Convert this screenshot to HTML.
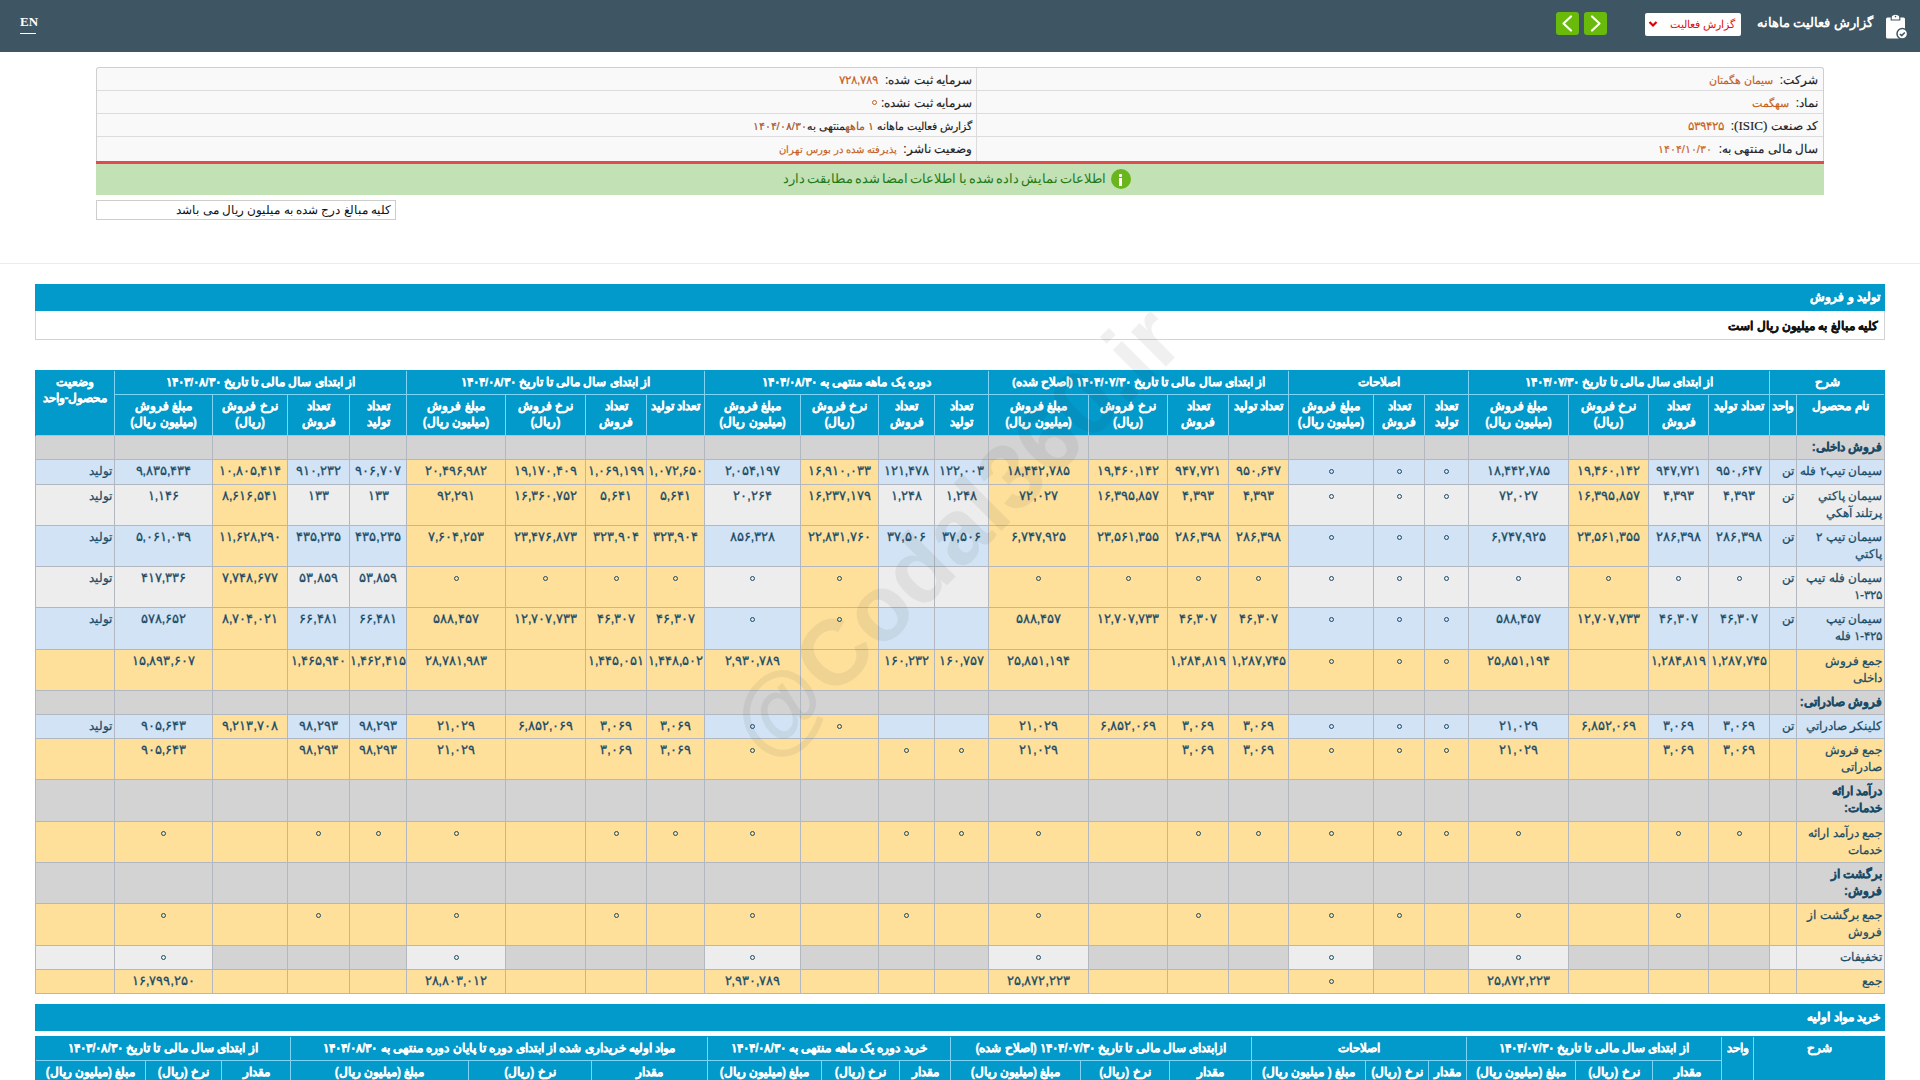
<!DOCTYPE html>
<html lang="fa"><head><meta charset="utf-8"><title>Codal</title><style>
*{margin:0;padding:0;box-sizing:border-box}
html,body{width:1920px;height:1080px;overflow:hidden;background:#fff;font-family:"Liberation Sans",sans-serif}
.a{position:absolute}
.c{position:absolute;border:1px solid;overflow:hidden;text-align:center;white-space:nowrap;direction:rtl}
.hc{padding-top:3px}
.hc0{padding-top:3px}
.bc{padding-top:2.5px}
.br{padding-top:2.5px;text-align:right;padding-right:2px}
.h{display:block;color:#fff;font-weight:bold;font-size:12px;line-height:16px;-webkit-text-stroke:0.3px #fff}
.h0{display:block;color:#fff;font-weight:bold;font-size:11.6px;line-height:16px;-webkit-text-stroke:0.3px #fff}
.b{display:block;color:#1a4b66;font-size:12px;line-height:17px;-webkit-text-stroke:0.25px #1a4b66}
.n{display:block;color:#1a4b66;font-size:12.5px;line-height:17px;-webkit-text-stroke:0.3px #1a4b66}
.z{display:inline-block;width:5px;height:5px;border:1.7px solid #1a4b66;border-radius:50%;vertical-align:middle;margin-top:1px}
.gl{display:block;color:#1a4b66;font-size:12px;font-weight:bold;line-height:17px;-webkit-text-stroke:0.3px #1a4b66}
</style></head>
<body>

<div class="a" style="left:0;top:0;width:1920px;height:52px;background:#3e5663"></div>
<div class="a" style="left:20px;top:15px;color:#fff;font-family:'Liberation Serif',serif;font-size:13px;font-weight:bold;line-height:14px">EN</div>
<div class="a" style="left:20px;top:33px;width:16px;height:1px;background:#fff"></div>
<div class="a" style="right:47px;top:12px;color:#fff;font-size:13.3px;font-weight:bold;line-height:22px;direction:rtl">گزارش فعالیت ماهانه</div>
<div class="a" style="left:1645px;top:13px;width:96px;height:23px;background:#fff;border-radius:2px"></div>
<div class="a" style="right:185px;top:13px;color:#e01010;font-size:10.8px;line-height:22px;direction:rtl">گزارش فعالیت</div>
<svg class="a" style="left:1648px;top:20px" width="10" height="8" viewBox="0 0 10 8"><path d="M1.5 2 L5 5.5 L8.5 2" stroke="#d00" stroke-width="2.2" fill="none"/></svg>
<div class="a" style="left:1556px;top:12px;width:23px;height:23px;background:#6aba0c;border-radius:3px"></div>
<div class="a" style="left:1584px;top:12px;width:23px;height:23px;background:#6aba0c;border-radius:3px"></div>
<svg class="a" style="left:1556px;top:12px" width="23" height="23" viewBox="0 0 23 23"><path d="M15 4.5 L7.5 11.5 L15 18.5" stroke="#fff" stroke-width="2.2" stroke-linecap="round" stroke-linejoin="round" fill="none"/></svg>
<svg class="a" style="left:1584px;top:12px" width="23" height="23" viewBox="0 0 23 23"><path d="M8 4.5 L15.5 11.5 L8 18.5" stroke="#fff" stroke-width="2.2" stroke-linecap="round" stroke-linejoin="round" fill="none"/></svg>
<svg class="a" style="left:1885px;top:13px" width="24" height="27" viewBox="0 0 24 27">
 <rect x="1" y="4.6" width="19" height="20.8" rx="1.5" fill="#fff"/>
 <path d="M6.2 7 L6.2 4.5 Q6.2 2.5 8.2 1.8 Q10.5 0.6 12.8 1.8 Q14.8 2.5 14.8 4.5 L14.8 7 Z" fill="#fff" stroke="#3e5663" stroke-width="1.1"/>
 <circle cx="10.5" cy="3.6" r="0.8" fill="#3e5663"/>
 <circle cx="17.3" cy="20.8" r="5.3" fill="#fff" stroke="#3e5663" stroke-width="1.5"/>
 <path d="M14.9 21 L16.7 22.6 L19.8 19.4" stroke="#3e5663" stroke-width="1.5" fill="none"/>
</svg>


<div class="a" style="left:96px;top:67px;width:1728px;height:95px;background:#f9f9f9;border:1px solid #cfcfcf;border-bottom:none;border-radius:3px 3px 0 0"></div>
<div class="a" style="left:97px;top:90px;width:1726px;height:1px;background:#dcdcdc"></div>
<div class="a" style="left:97px;top:113px;width:1726px;height:1px;background:#dcdcdc"></div>
<div class="a" style="left:97px;top:136px;width:1726px;height:1px;background:#dcdcdc"></div>
<div class="a" style="left:976px;top:68px;width:1px;height:93px;background:#dcdcdc"></div>
<div class="a" style="left:96px;top:161px;width:1728px;height:3px;background:#e24b4b"></div>
<div class="a" style="left:96px;top:164px;width:1728px;height:31px;background:#c2e1b4"></div>
<div class="a" style="right:102px;top:69px;font-size:12px;line-height:22px;direction:rtl;white-space:nowrap;color:#222;-webkit-text-stroke:0.15px #222">شرکت:&nbsp; <span style="color:#c65f1e;font-size:10.8px;-webkit-text-stroke:0.15px #c65f1e">سیمان هگمتان</span></div><div class="a" style="right:102px;top:92px;font-size:12px;line-height:22px;direction:rtl;white-space:nowrap;color:#222;-webkit-text-stroke:0.15px #222">نماد:&nbsp; <span style="color:#c65f1e;font-size:10.8px;-webkit-text-stroke:0.15px #c65f1e">سهگمت</span></div><div class="a" style="right:102px;top:115px;font-size:12px;line-height:22px;direction:rtl;white-space:nowrap;color:#222;-webkit-text-stroke:0.15px #222">کد صنعت <span style="font-family:'Liberation Serif',serif;font-size:13px">(ISIC)</span>:&nbsp; <span style="color:#c65f1e;font-size:12px;-webkit-text-stroke:0.15px #c65f1e">۵۳۹۴۲۵</span></div><div class="a" style="right:102px;top:138px;font-size:12px;line-height:22px;direction:rtl;white-space:nowrap;color:#222;-webkit-text-stroke:0.15px #222">سال مالی منتهی به:&nbsp; <span style="color:#c65f1e;font-size:11.3px;-webkit-text-stroke:0.15px #c65f1e">۱۴۰۴/۱۰/۳۰</span></div><div class="a" style="right:948px;top:69px;font-size:12px;line-height:22px;direction:rtl;white-space:nowrap;color:#222;-webkit-text-stroke:0.15px #222">سرمایه ثبت شده:&nbsp; <span style="color:#c65f1e;font-size:12px;-webkit-text-stroke:0.15px #c65f1e">۷۲۸,۷۸۹</span></div><div class="a" style="right:948px;top:92px;font-size:12px;line-height:22px;direction:rtl;white-space:nowrap;color:#222;-webkit-text-stroke:0.15px #222">سرمایه ثبت نشده:</div><div class="a" style="left:872px;top:100px;width:5px;height:5px;border:1.4px solid #c65f1e;border-radius:50%"></div><div class="a" style="right:948px;top:115px;font-size:11px;line-height:22px;direction:rtl;white-space:nowrap;color:#222;-webkit-text-stroke:0.15px #222">گزارش فعالیت ماهانه <span style="color:#c65f1e">۱ ماهه</span>منتهی به<span style="color:#c65f1e">۱۴۰۴/۰۸/۳۰</span></div><div class="a" style="right:948px;top:138px;font-size:12px;line-height:22px;direction:rtl;white-space:nowrap;color:#222;-webkit-text-stroke:0.15px #222">وضعیت ناشر:&nbsp; <span style="color:#c65f1e;font-size:10.2px;-webkit-text-stroke:0.15px #c65f1e">پذیرفته شده در بورس تهران</span></div>
<div class="a" style="left:1111px;top:169px;width:20px;height:20px;border-radius:50%;background:#69b51c"></div>
<div class="a" style="left:1119px;top:174px;width:3px;height:3px;background:#fff;border-radius:1px"></div>
<div class="a" style="left:1119px;top:178px;width:3px;height:8px;background:#fff"></div>
<div class="a" style="right:814px;top:168px;font-size:13px;word-spacing:-1.5px;line-height:22px;direction:rtl;white-space:nowrap;color:#1f7a17">اطلاعات نمایش داده شده با اطلاعات امضا شده مطابقت دارد</div>
<div class="a" style="left:96px;top:200px;width:300px;height:20px;border:1px solid #cdcdcd;background:#fff"></div>
<div class="a" style="right:1529px;top:200px;font-size:12px;line-height:20px;direction:rtl;white-space:nowrap;color:#111">کلیه مبالغ درج شده به میلیون ریال می باشد</div>
<div class="a" style="left:0;top:263px;width:1920px;height:1px;background:#ececec"></div>
<div class="a" style="left:35px;top:284px;width:1850px;height:27px;background:#0299cb"></div>
<div class="a" style="right:40px;top:286px;font-size:12px;font-weight:bold;line-height:22px;direction:rtl;color:#fff;-webkit-text-stroke:0.4px #fff">تولید و فروش</div>
<div class="a" style="left:35px;top:311px;width:1850px;height:29px;border:1px solid #d3d3d3;border-top:none;background:#fff"></div>
<div class="a" style="right:42px;top:315px;font-size:12px;font-weight:bold;line-height:22px;direction:rtl;color:#111;-webkit-text-stroke:0.4px #111">کلیه مبالغ به میلیون ریال است</div>
<div class="a" style="left:35px;top:1004px;width:1850px;height:27px;background:#0299cb"></div>
<div class="a" style="right:40px;top:1006px;font-size:12px;font-weight:bold;line-height:22px;direction:rtl;color:#fff;-webkit-text-stroke:0.4px #fff">خرید مواد اولیه</div>

<div class="c br" style="left:1796px;top:435px;width:89px;height:25px;background:#d3d3d3;border-color:#b3b8c0;"><span class="gl">فروش داخلی:</span></div>
<div class="c br" style="left:1769px;top:435px;width:28px;height:25px;background:#d3d3d3;border-color:#b3b8c0;"></div>
<div class="c bc" style="left:1708px;top:435px;width:62px;height:25px;background:#d3d3d3;border-color:#b3b8c0;"></div>
<div class="c bc" style="left:1648px;top:435px;width:61px;height:25px;background:#d3d3d3;border-color:#b3b8c0;"></div>
<div class="c bc" style="left:1568px;top:435px;width:81px;height:25px;background:#d3d3d3;border-color:#b3b8c0;"></div>
<div class="c bc" style="left:1468px;top:435px;width:101px;height:25px;background:#d3d3d3;border-color:#b3b8c0;"></div>
<div class="c bc" style="left:1424px;top:435px;width:45px;height:25px;background:#d3d3d3;border-color:#b3b8c0;"></div>
<div class="c bc" style="left:1373px;top:435px;width:52px;height:25px;background:#d3d3d3;border-color:#b3b8c0;"></div>
<div class="c bc" style="left:1288px;top:435px;width:86px;height:25px;background:#d3d3d3;border-color:#b3b8c0;"></div>
<div class="c bc" style="left:1228px;top:435px;width:61px;height:25px;background:#d3d3d3;border-color:#b3b8c0;"></div>
<div class="c bc" style="left:1167px;top:435px;width:62px;height:25px;background:#d3d3d3;border-color:#b3b8c0;"></div>
<div class="c bc" style="left:1088px;top:435px;width:80px;height:25px;background:#d3d3d3;border-color:#b3b8c0;"></div>
<div class="c bc" style="left:988px;top:435px;width:101px;height:25px;background:#d3d3d3;border-color:#b3b8c0;"></div>
<div class="c bc" style="left:934px;top:435px;width:55px;height:25px;background:#d3d3d3;border-color:#b3b8c0;"></div>
<div class="c bc" style="left:878px;top:435px;width:57px;height:25px;background:#d3d3d3;border-color:#b3b8c0;"></div>
<div class="c bc" style="left:800px;top:435px;width:79px;height:25px;background:#d3d3d3;border-color:#b3b8c0;"></div>
<div class="c bc" style="left:704px;top:435px;width:97px;height:25px;background:#d3d3d3;border-color:#b3b8c0;"></div>
<div class="c bc" style="left:646px;top:435px;width:59px;height:25px;background:#d3d3d3;border-color:#b3b8c0;"></div>
<div class="c bc" style="left:585px;top:435px;width:62px;height:25px;background:#d3d3d3;border-color:#b3b8c0;"></div>
<div class="c bc" style="left:505px;top:435px;width:81px;height:25px;background:#d3d3d3;border-color:#b3b8c0;"></div>
<div class="c bc" style="left:406px;top:435px;width:100px;height:25px;background:#d3d3d3;border-color:#b3b8c0;"></div>
<div class="c bc" style="left:349px;top:435px;width:58px;height:25px;background:#d3d3d3;border-color:#b3b8c0;"></div>
<div class="c bc" style="left:287px;top:435px;width:63px;height:25px;background:#d3d3d3;border-color:#b3b8c0;"></div>
<div class="c bc" style="left:212px;top:435px;width:76px;height:25px;background:#d3d3d3;border-color:#b3b8c0;"></div>
<div class="c bc" style="left:114px;top:435px;width:99px;height:25px;background:#d3d3d3;border-color:#b3b8c0;"></div>
<div class="c br" style="left:35px;top:435px;width:80px;height:25px;background:#d3d3d3;border-color:#b3b8c0;"></div>
<div class="c br" style="left:1796px;top:459px;width:89px;height:26px;background:#d1e3f4;border-color:#b3b8c0;"><span class="b">سیمان تیپ۲ فله</span></div>
<div class="c br" style="left:1769px;top:459px;width:28px;height:26px;background:#d1e3f4;border-color:#b3b8c0;"><span class="b">تن</span></div>
<div class="c bc" style="left:1708px;top:459px;width:62px;height:26px;background:#d1e3f4;border-color:#b3b8c0;"><span class="n">۹۵۰,۶۴۷</span></div>
<div class="c bc" style="left:1648px;top:459px;width:61px;height:26px;background:#d1e3f4;border-color:#b3b8c0;"><span class="n">۹۴۷,۷۲۱</span></div>
<div class="c bc" style="left:1568px;top:459px;width:81px;height:26px;background:#fee09b;border-color:#b3b8c0;"><span class="n">۱۹,۴۶۰,۱۴۲</span></div>
<div class="c bc" style="left:1468px;top:459px;width:101px;height:26px;background:#d1e3f4;border-color:#b3b8c0;"><span class="n">۱۸,۴۴۲,۷۸۵</span></div>
<div class="c bc" style="left:1424px;top:459px;width:45px;height:26px;background:#d1e3f4;border-color:#b3b8c0;"><span class="n"><i class="z"></i></span></div>
<div class="c bc" style="left:1373px;top:459px;width:52px;height:26px;background:#d1e3f4;border-color:#b3b8c0;"><span class="n"><i class="z"></i></span></div>
<div class="c bc" style="left:1288px;top:459px;width:86px;height:26px;background:#d1e3f4;border-color:#b3b8c0;"><span class="n"><i class="z"></i></span></div>
<div class="c bc" style="left:1228px;top:459px;width:61px;height:26px;background:#fee09b;border-color:#b3b8c0;"><span class="n">۹۵۰,۶۴۷</span></div>
<div class="c bc" style="left:1167px;top:459px;width:62px;height:26px;background:#fee09b;border-color:#b3b8c0;"><span class="n">۹۴۷,۷۲۱</span></div>
<div class="c bc" style="left:1088px;top:459px;width:80px;height:26px;background:#fee09b;border-color:#b3b8c0;"><span class="n">۱۹,۴۶۰,۱۴۲</span></div>
<div class="c bc" style="left:988px;top:459px;width:101px;height:26px;background:#fee09b;border-color:#b3b8c0;"><span class="n">۱۸,۴۴۲,۷۸۵</span></div>
<div class="c bc" style="left:934px;top:459px;width:55px;height:26px;background:#d1e3f4;border-color:#b3b8c0;"><span class="n">۱۲۲,۰۰۳</span></div>
<div class="c bc" style="left:878px;top:459px;width:57px;height:26px;background:#d1e3f4;border-color:#b3b8c0;"><span class="n">۱۲۱,۴۷۸</span></div>
<div class="c bc" style="left:800px;top:459px;width:79px;height:26px;background:#fee09b;border-color:#b3b8c0;"><span class="n">۱۶,۹۱۰,۰۳۳</span></div>
<div class="c bc" style="left:704px;top:459px;width:97px;height:26px;background:#d1e3f4;border-color:#b3b8c0;"><span class="n">۲,۰۵۴,۱۹۷</span></div>
<div class="c bc" style="left:646px;top:459px;width:59px;height:26px;background:#fee09b;border-color:#b3b8c0;"><span class="n">۱,۰۷۲,۶۵۰</span></div>
<div class="c bc" style="left:585px;top:459px;width:62px;height:26px;background:#fee09b;border-color:#b3b8c0;"><span class="n">۱,۰۶۹,۱۹۹</span></div>
<div class="c bc" style="left:505px;top:459px;width:81px;height:26px;background:#fee09b;border-color:#b3b8c0;"><span class="n">۱۹,۱۷۰,۴۰۹</span></div>
<div class="c bc" style="left:406px;top:459px;width:100px;height:26px;background:#fee09b;border-color:#b3b8c0;"><span class="n">۲۰,۴۹۶,۹۸۲</span></div>
<div class="c bc" style="left:349px;top:459px;width:58px;height:26px;background:#d1e3f4;border-color:#b3b8c0;"><span class="n">۹۰۶,۷۰۷</span></div>
<div class="c bc" style="left:287px;top:459px;width:63px;height:26px;background:#d1e3f4;border-color:#b3b8c0;"><span class="n">۹۱۰,۲۳۲</span></div>
<div class="c bc" style="left:212px;top:459px;width:76px;height:26px;background:#fee09b;border-color:#b3b8c0;"><span class="n">۱۰,۸۰۵,۴۱۴</span></div>
<div class="c bc" style="left:114px;top:459px;width:99px;height:26px;background:#d1e3f4;border-color:#b3b8c0;"><span class="n">۹,۸۳۵,۴۳۴</span></div>
<div class="c br" style="left:35px;top:459px;width:80px;height:26px;background:#d1e3f4;border-color:#b3b8c0;"><span class="b">تولید</span></div>
<div class="c br" style="left:1796px;top:484px;width:89px;height:42px;background:#ededed;border-color:#b3b8c0;"><span class="b">سیمان پاکتي<br>پرتلند آهکي</span></div>
<div class="c br" style="left:1769px;top:484px;width:28px;height:42px;background:#ededed;border-color:#b3b8c0;"><span class="b">تن</span></div>
<div class="c bc" style="left:1708px;top:484px;width:62px;height:42px;background:#ededed;border-color:#b3b8c0;"><span class="n">۴,۳۹۳</span></div>
<div class="c bc" style="left:1648px;top:484px;width:61px;height:42px;background:#ededed;border-color:#b3b8c0;"><span class="n">۴,۳۹۳</span></div>
<div class="c bc" style="left:1568px;top:484px;width:81px;height:42px;background:#fee09b;border-color:#b3b8c0;"><span class="n">۱۶,۳۹۵,۸۵۷</span></div>
<div class="c bc" style="left:1468px;top:484px;width:101px;height:42px;background:#ededed;border-color:#b3b8c0;"><span class="n">۷۲,۰۲۷</span></div>
<div class="c bc" style="left:1424px;top:484px;width:45px;height:42px;background:#ededed;border-color:#b3b8c0;"><span class="n"><i class="z"></i></span></div>
<div class="c bc" style="left:1373px;top:484px;width:52px;height:42px;background:#ededed;border-color:#b3b8c0;"><span class="n"><i class="z"></i></span></div>
<div class="c bc" style="left:1288px;top:484px;width:86px;height:42px;background:#ededed;border-color:#b3b8c0;"><span class="n"><i class="z"></i></span></div>
<div class="c bc" style="left:1228px;top:484px;width:61px;height:42px;background:#fee09b;border-color:#b3b8c0;"><span class="n">۴,۳۹۳</span></div>
<div class="c bc" style="left:1167px;top:484px;width:62px;height:42px;background:#fee09b;border-color:#b3b8c0;"><span class="n">۴,۳۹۳</span></div>
<div class="c bc" style="left:1088px;top:484px;width:80px;height:42px;background:#fee09b;border-color:#b3b8c0;"><span class="n">۱۶,۳۹۵,۸۵۷</span></div>
<div class="c bc" style="left:988px;top:484px;width:101px;height:42px;background:#fee09b;border-color:#b3b8c0;"><span class="n">۷۲,۰۲۷</span></div>
<div class="c bc" style="left:934px;top:484px;width:55px;height:42px;background:#ededed;border-color:#b3b8c0;"><span class="n">۱,۲۴۸</span></div>
<div class="c bc" style="left:878px;top:484px;width:57px;height:42px;background:#ededed;border-color:#b3b8c0;"><span class="n">۱,۲۴۸</span></div>
<div class="c bc" style="left:800px;top:484px;width:79px;height:42px;background:#fee09b;border-color:#b3b8c0;"><span class="n">۱۶,۲۳۷,۱۷۹</span></div>
<div class="c bc" style="left:704px;top:484px;width:97px;height:42px;background:#ededed;border-color:#b3b8c0;"><span class="n">۲۰,۲۶۴</span></div>
<div class="c bc" style="left:646px;top:484px;width:59px;height:42px;background:#fee09b;border-color:#b3b8c0;"><span class="n">۵,۶۴۱</span></div>
<div class="c bc" style="left:585px;top:484px;width:62px;height:42px;background:#fee09b;border-color:#b3b8c0;"><span class="n">۵,۶۴۱</span></div>
<div class="c bc" style="left:505px;top:484px;width:81px;height:42px;background:#fee09b;border-color:#b3b8c0;"><span class="n">۱۶,۳۶۰,۷۵۲</span></div>
<div class="c bc" style="left:406px;top:484px;width:100px;height:42px;background:#fee09b;border-color:#b3b8c0;"><span class="n">۹۲,۲۹۱</span></div>
<div class="c bc" style="left:349px;top:484px;width:58px;height:42px;background:#ededed;border-color:#b3b8c0;"><span class="n">۱۳۳</span></div>
<div class="c bc" style="left:287px;top:484px;width:63px;height:42px;background:#ededed;border-color:#b3b8c0;"><span class="n">۱۳۳</span></div>
<div class="c bc" style="left:212px;top:484px;width:76px;height:42px;background:#fee09b;border-color:#b3b8c0;"><span class="n">۸,۶۱۶,۵۴۱</span></div>
<div class="c bc" style="left:114px;top:484px;width:99px;height:42px;background:#ededed;border-color:#b3b8c0;"><span class="n">۱,۱۴۶</span></div>
<div class="c br" style="left:35px;top:484px;width:80px;height:42px;background:#ededed;border-color:#b3b8c0;"><span class="b">تولید</span></div>
<div class="c br" style="left:1796px;top:525px;width:89px;height:42px;background:#d1e3f4;border-color:#b3b8c0;"><span class="b">سیمان تیپ ۲<br>پاکتي</span></div>
<div class="c br" style="left:1769px;top:525px;width:28px;height:42px;background:#d1e3f4;border-color:#b3b8c0;"><span class="b">تن</span></div>
<div class="c bc" style="left:1708px;top:525px;width:62px;height:42px;background:#d1e3f4;border-color:#b3b8c0;"><span class="n">۲۸۶,۳۹۸</span></div>
<div class="c bc" style="left:1648px;top:525px;width:61px;height:42px;background:#d1e3f4;border-color:#b3b8c0;"><span class="n">۲۸۶,۳۹۸</span></div>
<div class="c bc" style="left:1568px;top:525px;width:81px;height:42px;background:#fee09b;border-color:#b3b8c0;"><span class="n">۲۳,۵۶۱,۳۵۵</span></div>
<div class="c bc" style="left:1468px;top:525px;width:101px;height:42px;background:#d1e3f4;border-color:#b3b8c0;"><span class="n">۶,۷۴۷,۹۲۵</span></div>
<div class="c bc" style="left:1424px;top:525px;width:45px;height:42px;background:#d1e3f4;border-color:#b3b8c0;"><span class="n"><i class="z"></i></span></div>
<div class="c bc" style="left:1373px;top:525px;width:52px;height:42px;background:#d1e3f4;border-color:#b3b8c0;"><span class="n"><i class="z"></i></span></div>
<div class="c bc" style="left:1288px;top:525px;width:86px;height:42px;background:#d1e3f4;border-color:#b3b8c0;"><span class="n"><i class="z"></i></span></div>
<div class="c bc" style="left:1228px;top:525px;width:61px;height:42px;background:#fee09b;border-color:#b3b8c0;"><span class="n">۲۸۶,۳۹۸</span></div>
<div class="c bc" style="left:1167px;top:525px;width:62px;height:42px;background:#fee09b;border-color:#b3b8c0;"><span class="n">۲۸۶,۳۹۸</span></div>
<div class="c bc" style="left:1088px;top:525px;width:80px;height:42px;background:#fee09b;border-color:#b3b8c0;"><span class="n">۲۳,۵۶۱,۳۵۵</span></div>
<div class="c bc" style="left:988px;top:525px;width:101px;height:42px;background:#fee09b;border-color:#b3b8c0;"><span class="n">۶,۷۴۷,۹۲۵</span></div>
<div class="c bc" style="left:934px;top:525px;width:55px;height:42px;background:#d1e3f4;border-color:#b3b8c0;"><span class="n">۳۷,۵۰۶</span></div>
<div class="c bc" style="left:878px;top:525px;width:57px;height:42px;background:#d1e3f4;border-color:#b3b8c0;"><span class="n">۳۷,۵۰۶</span></div>
<div class="c bc" style="left:800px;top:525px;width:79px;height:42px;background:#fee09b;border-color:#b3b8c0;"><span class="n">۲۲,۸۳۱,۷۶۰</span></div>
<div class="c bc" style="left:704px;top:525px;width:97px;height:42px;background:#d1e3f4;border-color:#b3b8c0;"><span class="n">۸۵۶,۳۲۸</span></div>
<div class="c bc" style="left:646px;top:525px;width:59px;height:42px;background:#fee09b;border-color:#b3b8c0;"><span class="n">۳۲۳,۹۰۴</span></div>
<div class="c bc" style="left:585px;top:525px;width:62px;height:42px;background:#fee09b;border-color:#b3b8c0;"><span class="n">۳۲۳,۹۰۴</span></div>
<div class="c bc" style="left:505px;top:525px;width:81px;height:42px;background:#fee09b;border-color:#b3b8c0;"><span class="n">۲۳,۴۷۶,۸۷۳</span></div>
<div class="c bc" style="left:406px;top:525px;width:100px;height:42px;background:#fee09b;border-color:#b3b8c0;"><span class="n">۷,۶۰۴,۲۵۳</span></div>
<div class="c bc" style="left:349px;top:525px;width:58px;height:42px;background:#d1e3f4;border-color:#b3b8c0;"><span class="n">۴۳۵,۲۳۵</span></div>
<div class="c bc" style="left:287px;top:525px;width:63px;height:42px;background:#d1e3f4;border-color:#b3b8c0;"><span class="n">۴۳۵,۲۳۵</span></div>
<div class="c bc" style="left:212px;top:525px;width:76px;height:42px;background:#fee09b;border-color:#b3b8c0;"><span class="n">۱۱,۶۲۸,۲۹۰</span></div>
<div class="c bc" style="left:114px;top:525px;width:99px;height:42px;background:#d1e3f4;border-color:#b3b8c0;"><span class="n">۵,۰۶۱,۰۳۹</span></div>
<div class="c br" style="left:35px;top:525px;width:80px;height:42px;background:#d1e3f4;border-color:#b3b8c0;"><span class="b">تولید</span></div>
<div class="c br" style="left:1796px;top:566px;width:89px;height:42px;background:#ededed;border-color:#b3b8c0;"><span class="b">سیمان فله تیپ<br>۱-۳۲۵</span></div>
<div class="c br" style="left:1769px;top:566px;width:28px;height:42px;background:#ededed;border-color:#b3b8c0;"><span class="b">تن</span></div>
<div class="c bc" style="left:1708px;top:566px;width:62px;height:42px;background:#ededed;border-color:#b3b8c0;"><span class="n"><i class="z"></i></span></div>
<div class="c bc" style="left:1648px;top:566px;width:61px;height:42px;background:#ededed;border-color:#b3b8c0;"><span class="n"><i class="z"></i></span></div>
<div class="c bc" style="left:1568px;top:566px;width:81px;height:42px;background:#fee09b;border-color:#b3b8c0;"><span class="n"><i class="z"></i></span></div>
<div class="c bc" style="left:1468px;top:566px;width:101px;height:42px;background:#ededed;border-color:#b3b8c0;"><span class="n"><i class="z"></i></span></div>
<div class="c bc" style="left:1424px;top:566px;width:45px;height:42px;background:#ededed;border-color:#b3b8c0;"><span class="n"><i class="z"></i></span></div>
<div class="c bc" style="left:1373px;top:566px;width:52px;height:42px;background:#ededed;border-color:#b3b8c0;"><span class="n"><i class="z"></i></span></div>
<div class="c bc" style="left:1288px;top:566px;width:86px;height:42px;background:#ededed;border-color:#b3b8c0;"><span class="n"><i class="z"></i></span></div>
<div class="c bc" style="left:1228px;top:566px;width:61px;height:42px;background:#fee09b;border-color:#b3b8c0;"><span class="n"><i class="z"></i></span></div>
<div class="c bc" style="left:1167px;top:566px;width:62px;height:42px;background:#fee09b;border-color:#b3b8c0;"><span class="n"><i class="z"></i></span></div>
<div class="c bc" style="left:1088px;top:566px;width:80px;height:42px;background:#fee09b;border-color:#b3b8c0;"><span class="n"><i class="z"></i></span></div>
<div class="c bc" style="left:988px;top:566px;width:101px;height:42px;background:#fee09b;border-color:#b3b8c0;"><span class="n"><i class="z"></i></span></div>
<div class="c bc" style="left:934px;top:566px;width:55px;height:42px;background:#ededed;border-color:#b3b8c0;"></div>
<div class="c bc" style="left:878px;top:566px;width:57px;height:42px;background:#ededed;border-color:#b3b8c0;"></div>
<div class="c bc" style="left:800px;top:566px;width:79px;height:42px;background:#fee09b;border-color:#b3b8c0;"><span class="n"><i class="z"></i></span></div>
<div class="c bc" style="left:704px;top:566px;width:97px;height:42px;background:#ededed;border-color:#b3b8c0;"><span class="n"><i class="z"></i></span></div>
<div class="c bc" style="left:646px;top:566px;width:59px;height:42px;background:#fee09b;border-color:#b3b8c0;"><span class="n"><i class="z"></i></span></div>
<div class="c bc" style="left:585px;top:566px;width:62px;height:42px;background:#fee09b;border-color:#b3b8c0;"><span class="n"><i class="z"></i></span></div>
<div class="c bc" style="left:505px;top:566px;width:81px;height:42px;background:#fee09b;border-color:#b3b8c0;"><span class="n"><i class="z"></i></span></div>
<div class="c bc" style="left:406px;top:566px;width:100px;height:42px;background:#fee09b;border-color:#b3b8c0;"><span class="n"><i class="z"></i></span></div>
<div class="c bc" style="left:349px;top:566px;width:58px;height:42px;background:#ededed;border-color:#b3b8c0;"><span class="n">۵۳,۸۵۹</span></div>
<div class="c bc" style="left:287px;top:566px;width:63px;height:42px;background:#ededed;border-color:#b3b8c0;"><span class="n">۵۳,۸۵۹</span></div>
<div class="c bc" style="left:212px;top:566px;width:76px;height:42px;background:#fee09b;border-color:#b3b8c0;"><span class="n">۷,۷۴۸,۶۷۷</span></div>
<div class="c bc" style="left:114px;top:566px;width:99px;height:42px;background:#ededed;border-color:#b3b8c0;"><span class="n">۴۱۷,۳۳۶</span></div>
<div class="c br" style="left:35px;top:566px;width:80px;height:42px;background:#ededed;border-color:#b3b8c0;"><span class="b">تولید</span></div>
<div class="c br" style="left:1796px;top:607px;width:89px;height:43px;background:#d1e3f4;border-color:#b3b8c0;"><span class="b">سیمان تیپ<br>۱-۴۲۵ فله</span></div>
<div class="c br" style="left:1769px;top:607px;width:28px;height:43px;background:#d1e3f4;border-color:#b3b8c0;"><span class="b">تن</span></div>
<div class="c bc" style="left:1708px;top:607px;width:62px;height:43px;background:#d1e3f4;border-color:#b3b8c0;"><span class="n">۴۶,۳۰۷</span></div>
<div class="c bc" style="left:1648px;top:607px;width:61px;height:43px;background:#d1e3f4;border-color:#b3b8c0;"><span class="n">۴۶,۳۰۷</span></div>
<div class="c bc" style="left:1568px;top:607px;width:81px;height:43px;background:#fee09b;border-color:#b3b8c0;"><span class="n">۱۲,۷۰۷,۷۳۳</span></div>
<div class="c bc" style="left:1468px;top:607px;width:101px;height:43px;background:#d1e3f4;border-color:#b3b8c0;"><span class="n">۵۸۸,۴۵۷</span></div>
<div class="c bc" style="left:1424px;top:607px;width:45px;height:43px;background:#d1e3f4;border-color:#b3b8c0;"><span class="n"><i class="z"></i></span></div>
<div class="c bc" style="left:1373px;top:607px;width:52px;height:43px;background:#d1e3f4;border-color:#b3b8c0;"><span class="n"><i class="z"></i></span></div>
<div class="c bc" style="left:1288px;top:607px;width:86px;height:43px;background:#d1e3f4;border-color:#b3b8c0;"><span class="n"><i class="z"></i></span></div>
<div class="c bc" style="left:1228px;top:607px;width:61px;height:43px;background:#fee09b;border-color:#b3b8c0;"><span class="n">۴۶,۳۰۷</span></div>
<div class="c bc" style="left:1167px;top:607px;width:62px;height:43px;background:#fee09b;border-color:#b3b8c0;"><span class="n">۴۶,۳۰۷</span></div>
<div class="c bc" style="left:1088px;top:607px;width:80px;height:43px;background:#fee09b;border-color:#b3b8c0;"><span class="n">۱۲,۷۰۷,۷۳۳</span></div>
<div class="c bc" style="left:988px;top:607px;width:101px;height:43px;background:#fee09b;border-color:#b3b8c0;"><span class="n">۵۸۸,۴۵۷</span></div>
<div class="c bc" style="left:934px;top:607px;width:55px;height:43px;background:#d1e3f4;border-color:#b3b8c0;"></div>
<div class="c bc" style="left:878px;top:607px;width:57px;height:43px;background:#d1e3f4;border-color:#b3b8c0;"></div>
<div class="c bc" style="left:800px;top:607px;width:79px;height:43px;background:#fee09b;border-color:#b3b8c0;"><span class="n"><i class="z"></i></span></div>
<div class="c bc" style="left:704px;top:607px;width:97px;height:43px;background:#d1e3f4;border-color:#b3b8c0;"><span class="n"><i class="z"></i></span></div>
<div class="c bc" style="left:646px;top:607px;width:59px;height:43px;background:#fee09b;border-color:#b3b8c0;"><span class="n">۴۶,۳۰۷</span></div>
<div class="c bc" style="left:585px;top:607px;width:62px;height:43px;background:#fee09b;border-color:#b3b8c0;"><span class="n">۴۶,۳۰۷</span></div>
<div class="c bc" style="left:505px;top:607px;width:81px;height:43px;background:#fee09b;border-color:#b3b8c0;"><span class="n">۱۲,۷۰۷,۷۳۳</span></div>
<div class="c bc" style="left:406px;top:607px;width:100px;height:43px;background:#fee09b;border-color:#b3b8c0;"><span class="n">۵۸۸,۴۵۷</span></div>
<div class="c bc" style="left:349px;top:607px;width:58px;height:43px;background:#d1e3f4;border-color:#b3b8c0;"><span class="n">۶۶,۴۸۱</span></div>
<div class="c bc" style="left:287px;top:607px;width:63px;height:43px;background:#d1e3f4;border-color:#b3b8c0;"><span class="n">۶۶,۴۸۱</span></div>
<div class="c bc" style="left:212px;top:607px;width:76px;height:43px;background:#fee09b;border-color:#b3b8c0;"><span class="n">۸,۷۰۴,۰۲۱</span></div>
<div class="c bc" style="left:114px;top:607px;width:99px;height:43px;background:#d1e3f4;border-color:#b3b8c0;"><span class="n">۵۷۸,۶۵۲</span></div>
<div class="c br" style="left:35px;top:607px;width:80px;height:43px;background:#d1e3f4;border-color:#b3b8c0;"><span class="b">تولید</span></div>
<div class="c br" style="left:1796px;top:649px;width:89px;height:42px;background:#fee09b;border-color:#b3b8c0;"><span class="b">جمع فروش<br>داخلی</span></div>
<div class="c br" style="left:1769px;top:649px;width:28px;height:42px;background:#fee09b;border-color:#b3b8c0;"></div>
<div class="c bc" style="left:1708px;top:649px;width:62px;height:42px;background:#fee09b;border-color:#b3b8c0;"><span class="n">۱,۲۸۷,۷۴۵</span></div>
<div class="c bc" style="left:1648px;top:649px;width:61px;height:42px;background:#fee09b;border-color:#b3b8c0;"><span class="n">۱,۲۸۴,۸۱۹</span></div>
<div class="c bc" style="left:1568px;top:649px;width:81px;height:42px;background:#fee09b;border-color:#b3b8c0;"></div>
<div class="c bc" style="left:1468px;top:649px;width:101px;height:42px;background:#fee09b;border-color:#b3b8c0;"><span class="n">۲۵,۸۵۱,۱۹۴</span></div>
<div class="c bc" style="left:1424px;top:649px;width:45px;height:42px;background:#fee09b;border-color:#b3b8c0;"><span class="n"><i class="z"></i></span></div>
<div class="c bc" style="left:1373px;top:649px;width:52px;height:42px;background:#fee09b;border-color:#b3b8c0;"><span class="n"><i class="z"></i></span></div>
<div class="c bc" style="left:1288px;top:649px;width:86px;height:42px;background:#fee09b;border-color:#b3b8c0;"><span class="n"><i class="z"></i></span></div>
<div class="c bc" style="left:1228px;top:649px;width:61px;height:42px;background:#fee09b;border-color:#b3b8c0;"><span class="n">۱,۲۸۷,۷۴۵</span></div>
<div class="c bc" style="left:1167px;top:649px;width:62px;height:42px;background:#fee09b;border-color:#b3b8c0;"><span class="n">۱,۲۸۴,۸۱۹</span></div>
<div class="c bc" style="left:1088px;top:649px;width:80px;height:42px;background:#fee09b;border-color:#b3b8c0;"></div>
<div class="c bc" style="left:988px;top:649px;width:101px;height:42px;background:#fee09b;border-color:#b3b8c0;"><span class="n">۲۵,۸۵۱,۱۹۴</span></div>
<div class="c bc" style="left:934px;top:649px;width:55px;height:42px;background:#fee09b;border-color:#b3b8c0;"><span class="n">۱۶۰,۷۵۷</span></div>
<div class="c bc" style="left:878px;top:649px;width:57px;height:42px;background:#fee09b;border-color:#b3b8c0;"><span class="n">۱۶۰,۲۳۲</span></div>
<div class="c bc" style="left:800px;top:649px;width:79px;height:42px;background:#fee09b;border-color:#b3b8c0;"></div>
<div class="c bc" style="left:704px;top:649px;width:97px;height:42px;background:#fee09b;border-color:#b3b8c0;"><span class="n">۲,۹۳۰,۷۸۹</span></div>
<div class="c bc" style="left:646px;top:649px;width:59px;height:42px;background:#fee09b;border-color:#b3b8c0;"><span class="n">۱,۴۴۸,۵۰۲</span></div>
<div class="c bc" style="left:585px;top:649px;width:62px;height:42px;background:#fee09b;border-color:#b3b8c0;"><span class="n">۱,۴۴۵,۰۵۱</span></div>
<div class="c bc" style="left:505px;top:649px;width:81px;height:42px;background:#fee09b;border-color:#b3b8c0;"></div>
<div class="c bc" style="left:406px;top:649px;width:100px;height:42px;background:#fee09b;border-color:#b3b8c0;"><span class="n">۲۸,۷۸۱,۹۸۳</span></div>
<div class="c bc" style="left:349px;top:649px;width:58px;height:42px;background:#fee09b;border-color:#b3b8c0;"><span class="n">۱,۴۶۲,۴۱۵</span></div>
<div class="c bc" style="left:287px;top:649px;width:63px;height:42px;background:#fee09b;border-color:#b3b8c0;"><span class="n">۱,۴۶۵,۹۴۰</span></div>
<div class="c bc" style="left:212px;top:649px;width:76px;height:42px;background:#fee09b;border-color:#b3b8c0;"></div>
<div class="c bc" style="left:114px;top:649px;width:99px;height:42px;background:#fee09b;border-color:#b3b8c0;"><span class="n">۱۵,۸۹۳,۶۰۷</span></div>
<div class="c br" style="left:35px;top:649px;width:80px;height:42px;background:#fee09b;border-color:#b3b8c0;"></div>
<div class="c br" style="left:1796px;top:690px;width:89px;height:25px;background:#d3d3d3;border-color:#b3b8c0;"><span class="gl">فروش صادراتی:</span></div>
<div class="c br" style="left:1769px;top:690px;width:28px;height:25px;background:#d3d3d3;border-color:#b3b8c0;"></div>
<div class="c bc" style="left:1708px;top:690px;width:62px;height:25px;background:#d3d3d3;border-color:#b3b8c0;"></div>
<div class="c bc" style="left:1648px;top:690px;width:61px;height:25px;background:#d3d3d3;border-color:#b3b8c0;"></div>
<div class="c bc" style="left:1568px;top:690px;width:81px;height:25px;background:#d3d3d3;border-color:#b3b8c0;"></div>
<div class="c bc" style="left:1468px;top:690px;width:101px;height:25px;background:#d3d3d3;border-color:#b3b8c0;"></div>
<div class="c bc" style="left:1424px;top:690px;width:45px;height:25px;background:#d3d3d3;border-color:#b3b8c0;"></div>
<div class="c bc" style="left:1373px;top:690px;width:52px;height:25px;background:#d3d3d3;border-color:#b3b8c0;"></div>
<div class="c bc" style="left:1288px;top:690px;width:86px;height:25px;background:#d3d3d3;border-color:#b3b8c0;"></div>
<div class="c bc" style="left:1228px;top:690px;width:61px;height:25px;background:#d3d3d3;border-color:#b3b8c0;"></div>
<div class="c bc" style="left:1167px;top:690px;width:62px;height:25px;background:#d3d3d3;border-color:#b3b8c0;"></div>
<div class="c bc" style="left:1088px;top:690px;width:80px;height:25px;background:#d3d3d3;border-color:#b3b8c0;"></div>
<div class="c bc" style="left:988px;top:690px;width:101px;height:25px;background:#d3d3d3;border-color:#b3b8c0;"></div>
<div class="c bc" style="left:934px;top:690px;width:55px;height:25px;background:#d3d3d3;border-color:#b3b8c0;"></div>
<div class="c bc" style="left:878px;top:690px;width:57px;height:25px;background:#d3d3d3;border-color:#b3b8c0;"></div>
<div class="c bc" style="left:800px;top:690px;width:79px;height:25px;background:#d3d3d3;border-color:#b3b8c0;"></div>
<div class="c bc" style="left:704px;top:690px;width:97px;height:25px;background:#d3d3d3;border-color:#b3b8c0;"></div>
<div class="c bc" style="left:646px;top:690px;width:59px;height:25px;background:#d3d3d3;border-color:#b3b8c0;"></div>
<div class="c bc" style="left:585px;top:690px;width:62px;height:25px;background:#d3d3d3;border-color:#b3b8c0;"></div>
<div class="c bc" style="left:505px;top:690px;width:81px;height:25px;background:#d3d3d3;border-color:#b3b8c0;"></div>
<div class="c bc" style="left:406px;top:690px;width:100px;height:25px;background:#d3d3d3;border-color:#b3b8c0;"></div>
<div class="c bc" style="left:349px;top:690px;width:58px;height:25px;background:#d3d3d3;border-color:#b3b8c0;"></div>
<div class="c bc" style="left:287px;top:690px;width:63px;height:25px;background:#d3d3d3;border-color:#b3b8c0;"></div>
<div class="c bc" style="left:212px;top:690px;width:76px;height:25px;background:#d3d3d3;border-color:#b3b8c0;"></div>
<div class="c bc" style="left:114px;top:690px;width:99px;height:25px;background:#d3d3d3;border-color:#b3b8c0;"></div>
<div class="c br" style="left:35px;top:690px;width:80px;height:25px;background:#d3d3d3;border-color:#b3b8c0;"></div>
<div class="c br" style="left:1796px;top:714px;width:89px;height:25px;background:#d1e3f4;border-color:#b3b8c0;"><span class="b">کلینکر صادراتي</span></div>
<div class="c br" style="left:1769px;top:714px;width:28px;height:25px;background:#d1e3f4;border-color:#b3b8c0;"><span class="b">تن</span></div>
<div class="c bc" style="left:1708px;top:714px;width:62px;height:25px;background:#d1e3f4;border-color:#b3b8c0;"><span class="n">۳,۰۶۹</span></div>
<div class="c bc" style="left:1648px;top:714px;width:61px;height:25px;background:#d1e3f4;border-color:#b3b8c0;"><span class="n">۳,۰۶۹</span></div>
<div class="c bc" style="left:1568px;top:714px;width:81px;height:25px;background:#fee09b;border-color:#b3b8c0;"><span class="n">۶,۸۵۲,۰۶۹</span></div>
<div class="c bc" style="left:1468px;top:714px;width:101px;height:25px;background:#d1e3f4;border-color:#b3b8c0;"><span class="n">۲۱,۰۲۹</span></div>
<div class="c bc" style="left:1424px;top:714px;width:45px;height:25px;background:#d1e3f4;border-color:#b3b8c0;"><span class="n"><i class="z"></i></span></div>
<div class="c bc" style="left:1373px;top:714px;width:52px;height:25px;background:#d1e3f4;border-color:#b3b8c0;"><span class="n"><i class="z"></i></span></div>
<div class="c bc" style="left:1288px;top:714px;width:86px;height:25px;background:#d1e3f4;border-color:#b3b8c0;"><span class="n"><i class="z"></i></span></div>
<div class="c bc" style="left:1228px;top:714px;width:61px;height:25px;background:#fee09b;border-color:#b3b8c0;"><span class="n">۳,۰۶۹</span></div>
<div class="c bc" style="left:1167px;top:714px;width:62px;height:25px;background:#fee09b;border-color:#b3b8c0;"><span class="n">۳,۰۶۹</span></div>
<div class="c bc" style="left:1088px;top:714px;width:80px;height:25px;background:#fee09b;border-color:#b3b8c0;"><span class="n">۶,۸۵۲,۰۶۹</span></div>
<div class="c bc" style="left:988px;top:714px;width:101px;height:25px;background:#fee09b;border-color:#b3b8c0;"><span class="n">۲۱,۰۲۹</span></div>
<div class="c bc" style="left:934px;top:714px;width:55px;height:25px;background:#d1e3f4;border-color:#b3b8c0;"></div>
<div class="c bc" style="left:878px;top:714px;width:57px;height:25px;background:#d1e3f4;border-color:#b3b8c0;"></div>
<div class="c bc" style="left:800px;top:714px;width:79px;height:25px;background:#fee09b;border-color:#b3b8c0;"><span class="n"><i class="z"></i></span></div>
<div class="c bc" style="left:704px;top:714px;width:97px;height:25px;background:#d1e3f4;border-color:#b3b8c0;"><span class="n"><i class="z"></i></span></div>
<div class="c bc" style="left:646px;top:714px;width:59px;height:25px;background:#fee09b;border-color:#b3b8c0;"><span class="n">۳,۰۶۹</span></div>
<div class="c bc" style="left:585px;top:714px;width:62px;height:25px;background:#fee09b;border-color:#b3b8c0;"><span class="n">۳,۰۶۹</span></div>
<div class="c bc" style="left:505px;top:714px;width:81px;height:25px;background:#fee09b;border-color:#b3b8c0;"><span class="n">۶,۸۵۲,۰۶۹</span></div>
<div class="c bc" style="left:406px;top:714px;width:100px;height:25px;background:#fee09b;border-color:#b3b8c0;"><span class="n">۲۱,۰۲۹</span></div>
<div class="c bc" style="left:349px;top:714px;width:58px;height:25px;background:#d1e3f4;border-color:#b3b8c0;"><span class="n">۹۸,۲۹۳</span></div>
<div class="c bc" style="left:287px;top:714px;width:63px;height:25px;background:#d1e3f4;border-color:#b3b8c0;"><span class="n">۹۸,۲۹۳</span></div>
<div class="c bc" style="left:212px;top:714px;width:76px;height:25px;background:#fee09b;border-color:#b3b8c0;"><span class="n">۹,۲۱۳,۷۰۸</span></div>
<div class="c bc" style="left:114px;top:714px;width:99px;height:25px;background:#d1e3f4;border-color:#b3b8c0;"><span class="n">۹۰۵,۶۴۳</span></div>
<div class="c br" style="left:35px;top:714px;width:80px;height:25px;background:#d1e3f4;border-color:#b3b8c0;"><span class="b">تولید</span></div>
<div class="c br" style="left:1796px;top:738px;width:89px;height:42px;background:#fee09b;border-color:#b3b8c0;"><span class="b">جمع فروش<br>صادراتی</span></div>
<div class="c br" style="left:1769px;top:738px;width:28px;height:42px;background:#fee09b;border-color:#b3b8c0;"></div>
<div class="c bc" style="left:1708px;top:738px;width:62px;height:42px;background:#fee09b;border-color:#b3b8c0;"><span class="n">۳,۰۶۹</span></div>
<div class="c bc" style="left:1648px;top:738px;width:61px;height:42px;background:#fee09b;border-color:#b3b8c0;"><span class="n">۳,۰۶۹</span></div>
<div class="c bc" style="left:1568px;top:738px;width:81px;height:42px;background:#fee09b;border-color:#b3b8c0;"></div>
<div class="c bc" style="left:1468px;top:738px;width:101px;height:42px;background:#fee09b;border-color:#b3b8c0;"><span class="n">۲۱,۰۲۹</span></div>
<div class="c bc" style="left:1424px;top:738px;width:45px;height:42px;background:#fee09b;border-color:#b3b8c0;"><span class="n"><i class="z"></i></span></div>
<div class="c bc" style="left:1373px;top:738px;width:52px;height:42px;background:#fee09b;border-color:#b3b8c0;"><span class="n"><i class="z"></i></span></div>
<div class="c bc" style="left:1288px;top:738px;width:86px;height:42px;background:#fee09b;border-color:#b3b8c0;"><span class="n"><i class="z"></i></span></div>
<div class="c bc" style="left:1228px;top:738px;width:61px;height:42px;background:#fee09b;border-color:#b3b8c0;"><span class="n">۳,۰۶۹</span></div>
<div class="c bc" style="left:1167px;top:738px;width:62px;height:42px;background:#fee09b;border-color:#b3b8c0;"><span class="n">۳,۰۶۹</span></div>
<div class="c bc" style="left:1088px;top:738px;width:80px;height:42px;background:#fee09b;border-color:#b3b8c0;"></div>
<div class="c bc" style="left:988px;top:738px;width:101px;height:42px;background:#fee09b;border-color:#b3b8c0;"><span class="n">۲۱,۰۲۹</span></div>
<div class="c bc" style="left:934px;top:738px;width:55px;height:42px;background:#fee09b;border-color:#b3b8c0;"><span class="n"><i class="z"></i></span></div>
<div class="c bc" style="left:878px;top:738px;width:57px;height:42px;background:#fee09b;border-color:#b3b8c0;"><span class="n"><i class="z"></i></span></div>
<div class="c bc" style="left:800px;top:738px;width:79px;height:42px;background:#fee09b;border-color:#b3b8c0;"></div>
<div class="c bc" style="left:704px;top:738px;width:97px;height:42px;background:#fee09b;border-color:#b3b8c0;"><span class="n"><i class="z"></i></span></div>
<div class="c bc" style="left:646px;top:738px;width:59px;height:42px;background:#fee09b;border-color:#b3b8c0;"><span class="n">۳,۰۶۹</span></div>
<div class="c bc" style="left:585px;top:738px;width:62px;height:42px;background:#fee09b;border-color:#b3b8c0;"><span class="n">۳,۰۶۹</span></div>
<div class="c bc" style="left:505px;top:738px;width:81px;height:42px;background:#fee09b;border-color:#b3b8c0;"></div>
<div class="c bc" style="left:406px;top:738px;width:100px;height:42px;background:#fee09b;border-color:#b3b8c0;"><span class="n">۲۱,۰۲۹</span></div>
<div class="c bc" style="left:349px;top:738px;width:58px;height:42px;background:#fee09b;border-color:#b3b8c0;"><span class="n">۹۸,۲۹۳</span></div>
<div class="c bc" style="left:287px;top:738px;width:63px;height:42px;background:#fee09b;border-color:#b3b8c0;"><span class="n">۹۸,۲۹۳</span></div>
<div class="c bc" style="left:212px;top:738px;width:76px;height:42px;background:#fee09b;border-color:#b3b8c0;"></div>
<div class="c bc" style="left:114px;top:738px;width:99px;height:42px;background:#fee09b;border-color:#b3b8c0;"><span class="n">۹۰۵,۶۴۳</span></div>
<div class="c br" style="left:35px;top:738px;width:80px;height:42px;background:#fee09b;border-color:#b3b8c0;"></div>
<div class="c br" style="left:1796px;top:779px;width:89px;height:43px;background:#d3d3d3;border-color:#b3b8c0;"><span class="gl">درآمد ارائه<br>خدمات:</span></div>
<div class="c br" style="left:1769px;top:779px;width:28px;height:43px;background:#d3d3d3;border-color:#b3b8c0;"></div>
<div class="c bc" style="left:1708px;top:779px;width:62px;height:43px;background:#d3d3d3;border-color:#b3b8c0;"></div>
<div class="c bc" style="left:1648px;top:779px;width:61px;height:43px;background:#d3d3d3;border-color:#b3b8c0;"></div>
<div class="c bc" style="left:1568px;top:779px;width:81px;height:43px;background:#d3d3d3;border-color:#b3b8c0;"></div>
<div class="c bc" style="left:1468px;top:779px;width:101px;height:43px;background:#d3d3d3;border-color:#b3b8c0;"></div>
<div class="c bc" style="left:1424px;top:779px;width:45px;height:43px;background:#d3d3d3;border-color:#b3b8c0;"></div>
<div class="c bc" style="left:1373px;top:779px;width:52px;height:43px;background:#d3d3d3;border-color:#b3b8c0;"></div>
<div class="c bc" style="left:1288px;top:779px;width:86px;height:43px;background:#d3d3d3;border-color:#b3b8c0;"></div>
<div class="c bc" style="left:1228px;top:779px;width:61px;height:43px;background:#d3d3d3;border-color:#b3b8c0;"></div>
<div class="c bc" style="left:1167px;top:779px;width:62px;height:43px;background:#d3d3d3;border-color:#b3b8c0;"></div>
<div class="c bc" style="left:1088px;top:779px;width:80px;height:43px;background:#d3d3d3;border-color:#b3b8c0;"></div>
<div class="c bc" style="left:988px;top:779px;width:101px;height:43px;background:#d3d3d3;border-color:#b3b8c0;"></div>
<div class="c bc" style="left:934px;top:779px;width:55px;height:43px;background:#d3d3d3;border-color:#b3b8c0;"></div>
<div class="c bc" style="left:878px;top:779px;width:57px;height:43px;background:#d3d3d3;border-color:#b3b8c0;"></div>
<div class="c bc" style="left:800px;top:779px;width:79px;height:43px;background:#d3d3d3;border-color:#b3b8c0;"></div>
<div class="c bc" style="left:704px;top:779px;width:97px;height:43px;background:#d3d3d3;border-color:#b3b8c0;"></div>
<div class="c bc" style="left:646px;top:779px;width:59px;height:43px;background:#d3d3d3;border-color:#b3b8c0;"></div>
<div class="c bc" style="left:585px;top:779px;width:62px;height:43px;background:#d3d3d3;border-color:#b3b8c0;"></div>
<div class="c bc" style="left:505px;top:779px;width:81px;height:43px;background:#d3d3d3;border-color:#b3b8c0;"></div>
<div class="c bc" style="left:406px;top:779px;width:100px;height:43px;background:#d3d3d3;border-color:#b3b8c0;"></div>
<div class="c bc" style="left:349px;top:779px;width:58px;height:43px;background:#d3d3d3;border-color:#b3b8c0;"></div>
<div class="c bc" style="left:287px;top:779px;width:63px;height:43px;background:#d3d3d3;border-color:#b3b8c0;"></div>
<div class="c bc" style="left:212px;top:779px;width:76px;height:43px;background:#d3d3d3;border-color:#b3b8c0;"></div>
<div class="c bc" style="left:114px;top:779px;width:99px;height:43px;background:#d3d3d3;border-color:#b3b8c0;"></div>
<div class="c br" style="left:35px;top:779px;width:80px;height:43px;background:#d3d3d3;border-color:#b3b8c0;"></div>
<div class="c br" style="left:1796px;top:821px;width:89px;height:42px;background:#fee09b;border-color:#b3b8c0;"><span class="b">جمع درآمد ارائه<br>خدمات</span></div>
<div class="c br" style="left:1769px;top:821px;width:28px;height:42px;background:#fee09b;border-color:#b3b8c0;"></div>
<div class="c bc" style="left:1708px;top:821px;width:62px;height:42px;background:#fee09b;border-color:#b3b8c0;"><span class="n"><i class="z"></i></span></div>
<div class="c bc" style="left:1648px;top:821px;width:61px;height:42px;background:#fee09b;border-color:#b3b8c0;"><span class="n"><i class="z"></i></span></div>
<div class="c bc" style="left:1568px;top:821px;width:81px;height:42px;background:#fee09b;border-color:#b3b8c0;"></div>
<div class="c bc" style="left:1468px;top:821px;width:101px;height:42px;background:#fee09b;border-color:#b3b8c0;"><span class="n"><i class="z"></i></span></div>
<div class="c bc" style="left:1424px;top:821px;width:45px;height:42px;background:#fee09b;border-color:#b3b8c0;"><span class="n"><i class="z"></i></span></div>
<div class="c bc" style="left:1373px;top:821px;width:52px;height:42px;background:#fee09b;border-color:#b3b8c0;"><span class="n"><i class="z"></i></span></div>
<div class="c bc" style="left:1288px;top:821px;width:86px;height:42px;background:#fee09b;border-color:#b3b8c0;"><span class="n"><i class="z"></i></span></div>
<div class="c bc" style="left:1228px;top:821px;width:61px;height:42px;background:#fee09b;border-color:#b3b8c0;"><span class="n"><i class="z"></i></span></div>
<div class="c bc" style="left:1167px;top:821px;width:62px;height:42px;background:#fee09b;border-color:#b3b8c0;"><span class="n"><i class="z"></i></span></div>
<div class="c bc" style="left:1088px;top:821px;width:80px;height:42px;background:#fee09b;border-color:#b3b8c0;"></div>
<div class="c bc" style="left:988px;top:821px;width:101px;height:42px;background:#fee09b;border-color:#b3b8c0;"><span class="n"><i class="z"></i></span></div>
<div class="c bc" style="left:934px;top:821px;width:55px;height:42px;background:#fee09b;border-color:#b3b8c0;"><span class="n"><i class="z"></i></span></div>
<div class="c bc" style="left:878px;top:821px;width:57px;height:42px;background:#fee09b;border-color:#b3b8c0;"><span class="n"><i class="z"></i></span></div>
<div class="c bc" style="left:800px;top:821px;width:79px;height:42px;background:#fee09b;border-color:#b3b8c0;"></div>
<div class="c bc" style="left:704px;top:821px;width:97px;height:42px;background:#fee09b;border-color:#b3b8c0;"><span class="n"><i class="z"></i></span></div>
<div class="c bc" style="left:646px;top:821px;width:59px;height:42px;background:#fee09b;border-color:#b3b8c0;"><span class="n"><i class="z"></i></span></div>
<div class="c bc" style="left:585px;top:821px;width:62px;height:42px;background:#fee09b;border-color:#b3b8c0;"><span class="n"><i class="z"></i></span></div>
<div class="c bc" style="left:505px;top:821px;width:81px;height:42px;background:#fee09b;border-color:#b3b8c0;"></div>
<div class="c bc" style="left:406px;top:821px;width:100px;height:42px;background:#fee09b;border-color:#b3b8c0;"><span class="n"><i class="z"></i></span></div>
<div class="c bc" style="left:349px;top:821px;width:58px;height:42px;background:#fee09b;border-color:#b3b8c0;"><span class="n"><i class="z"></i></span></div>
<div class="c bc" style="left:287px;top:821px;width:63px;height:42px;background:#fee09b;border-color:#b3b8c0;"><span class="n"><i class="z"></i></span></div>
<div class="c bc" style="left:212px;top:821px;width:76px;height:42px;background:#fee09b;border-color:#b3b8c0;"></div>
<div class="c bc" style="left:114px;top:821px;width:99px;height:42px;background:#fee09b;border-color:#b3b8c0;"><span class="n"><i class="z"></i></span></div>
<div class="c br" style="left:35px;top:821px;width:80px;height:42px;background:#fee09b;border-color:#b3b8c0;"></div>
<div class="c br" style="left:1796px;top:862px;width:89px;height:42px;background:#d3d3d3;border-color:#b3b8c0;"><span class="gl">برگشت از<br>فروش:</span></div>
<div class="c br" style="left:1769px;top:862px;width:28px;height:42px;background:#d3d3d3;border-color:#b3b8c0;"></div>
<div class="c bc" style="left:1708px;top:862px;width:62px;height:42px;background:#d3d3d3;border-color:#b3b8c0;"></div>
<div class="c bc" style="left:1648px;top:862px;width:61px;height:42px;background:#d3d3d3;border-color:#b3b8c0;"></div>
<div class="c bc" style="left:1568px;top:862px;width:81px;height:42px;background:#d3d3d3;border-color:#b3b8c0;"></div>
<div class="c bc" style="left:1468px;top:862px;width:101px;height:42px;background:#d3d3d3;border-color:#b3b8c0;"></div>
<div class="c bc" style="left:1424px;top:862px;width:45px;height:42px;background:#d3d3d3;border-color:#b3b8c0;"></div>
<div class="c bc" style="left:1373px;top:862px;width:52px;height:42px;background:#d3d3d3;border-color:#b3b8c0;"></div>
<div class="c bc" style="left:1288px;top:862px;width:86px;height:42px;background:#d3d3d3;border-color:#b3b8c0;"></div>
<div class="c bc" style="left:1228px;top:862px;width:61px;height:42px;background:#d3d3d3;border-color:#b3b8c0;"></div>
<div class="c bc" style="left:1167px;top:862px;width:62px;height:42px;background:#d3d3d3;border-color:#b3b8c0;"></div>
<div class="c bc" style="left:1088px;top:862px;width:80px;height:42px;background:#d3d3d3;border-color:#b3b8c0;"></div>
<div class="c bc" style="left:988px;top:862px;width:101px;height:42px;background:#d3d3d3;border-color:#b3b8c0;"></div>
<div class="c bc" style="left:934px;top:862px;width:55px;height:42px;background:#d3d3d3;border-color:#b3b8c0;"></div>
<div class="c bc" style="left:878px;top:862px;width:57px;height:42px;background:#d3d3d3;border-color:#b3b8c0;"></div>
<div class="c bc" style="left:800px;top:862px;width:79px;height:42px;background:#d3d3d3;border-color:#b3b8c0;"></div>
<div class="c bc" style="left:704px;top:862px;width:97px;height:42px;background:#d3d3d3;border-color:#b3b8c0;"></div>
<div class="c bc" style="left:646px;top:862px;width:59px;height:42px;background:#d3d3d3;border-color:#b3b8c0;"></div>
<div class="c bc" style="left:585px;top:862px;width:62px;height:42px;background:#d3d3d3;border-color:#b3b8c0;"></div>
<div class="c bc" style="left:505px;top:862px;width:81px;height:42px;background:#d3d3d3;border-color:#b3b8c0;"></div>
<div class="c bc" style="left:406px;top:862px;width:100px;height:42px;background:#d3d3d3;border-color:#b3b8c0;"></div>
<div class="c bc" style="left:349px;top:862px;width:58px;height:42px;background:#d3d3d3;border-color:#b3b8c0;"></div>
<div class="c bc" style="left:287px;top:862px;width:63px;height:42px;background:#d3d3d3;border-color:#b3b8c0;"></div>
<div class="c bc" style="left:212px;top:862px;width:76px;height:42px;background:#d3d3d3;border-color:#b3b8c0;"></div>
<div class="c bc" style="left:114px;top:862px;width:99px;height:42px;background:#d3d3d3;border-color:#b3b8c0;"></div>
<div class="c br" style="left:35px;top:862px;width:80px;height:42px;background:#d3d3d3;border-color:#b3b8c0;"></div>
<div class="c br" style="left:1796px;top:903px;width:89px;height:43px;background:#fee09b;border-color:#b3b8c0;"><span class="b">جمع برگشت از<br>فروش</span></div>
<div class="c br" style="left:1769px;top:903px;width:28px;height:43px;background:#fee09b;border-color:#b3b8c0;"></div>
<div class="c bc" style="left:1708px;top:903px;width:62px;height:43px;background:#fee09b;border-color:#b3b8c0;"></div>
<div class="c bc" style="left:1648px;top:903px;width:61px;height:43px;background:#fee09b;border-color:#b3b8c0;"><span class="n"><i class="z"></i></span></div>
<div class="c bc" style="left:1568px;top:903px;width:81px;height:43px;background:#fee09b;border-color:#b3b8c0;"></div>
<div class="c bc" style="left:1468px;top:903px;width:101px;height:43px;background:#fee09b;border-color:#b3b8c0;"><span class="n"><i class="z"></i></span></div>
<div class="c bc" style="left:1424px;top:903px;width:45px;height:43px;background:#fee09b;border-color:#b3b8c0;"></div>
<div class="c bc" style="left:1373px;top:903px;width:52px;height:43px;background:#fee09b;border-color:#b3b8c0;"><span class="n"><i class="z"></i></span></div>
<div class="c bc" style="left:1288px;top:903px;width:86px;height:43px;background:#fee09b;border-color:#b3b8c0;"><span class="n"><i class="z"></i></span></div>
<div class="c bc" style="left:1228px;top:903px;width:61px;height:43px;background:#fee09b;border-color:#b3b8c0;"></div>
<div class="c bc" style="left:1167px;top:903px;width:62px;height:43px;background:#fee09b;border-color:#b3b8c0;"><span class="n"><i class="z"></i></span></div>
<div class="c bc" style="left:1088px;top:903px;width:80px;height:43px;background:#fee09b;border-color:#b3b8c0;"></div>
<div class="c bc" style="left:988px;top:903px;width:101px;height:43px;background:#fee09b;border-color:#b3b8c0;"><span class="n"><i class="z"></i></span></div>
<div class="c bc" style="left:934px;top:903px;width:55px;height:43px;background:#fee09b;border-color:#b3b8c0;"></div>
<div class="c bc" style="left:878px;top:903px;width:57px;height:43px;background:#fee09b;border-color:#b3b8c0;"><span class="n"><i class="z"></i></span></div>
<div class="c bc" style="left:800px;top:903px;width:79px;height:43px;background:#fee09b;border-color:#b3b8c0;"></div>
<div class="c bc" style="left:704px;top:903px;width:97px;height:43px;background:#fee09b;border-color:#b3b8c0;"><span class="n"><i class="z"></i></span></div>
<div class="c bc" style="left:646px;top:903px;width:59px;height:43px;background:#fee09b;border-color:#b3b8c0;"></div>
<div class="c bc" style="left:585px;top:903px;width:62px;height:43px;background:#fee09b;border-color:#b3b8c0;"><span class="n"><i class="z"></i></span></div>
<div class="c bc" style="left:505px;top:903px;width:81px;height:43px;background:#fee09b;border-color:#b3b8c0;"></div>
<div class="c bc" style="left:406px;top:903px;width:100px;height:43px;background:#fee09b;border-color:#b3b8c0;"><span class="n"><i class="z"></i></span></div>
<div class="c bc" style="left:349px;top:903px;width:58px;height:43px;background:#fee09b;border-color:#b3b8c0;"></div>
<div class="c bc" style="left:287px;top:903px;width:63px;height:43px;background:#fee09b;border-color:#b3b8c0;"><span class="n"><i class="z"></i></span></div>
<div class="c bc" style="left:212px;top:903px;width:76px;height:43px;background:#fee09b;border-color:#b3b8c0;"></div>
<div class="c bc" style="left:114px;top:903px;width:99px;height:43px;background:#fee09b;border-color:#b3b8c0;"><span class="n"><i class="z"></i></span></div>
<div class="c br" style="left:35px;top:903px;width:80px;height:43px;background:#fee09b;border-color:#b3b8c0;"></div>
<div class="c br" style="left:1796px;top:945px;width:89px;height:25px;background:#ededed;border-color:#b3b8c0;"><span class="b">تخفیفات</span></div>
<div class="c br" style="left:1769px;top:945px;width:28px;height:25px;background:#ededed;border-color:#b3b8c0;"></div>
<div class="c bc" style="left:1708px;top:945px;width:62px;height:25px;background:#d3d3d3;border-color:#b3b8c0;"></div>
<div class="c bc" style="left:1648px;top:945px;width:61px;height:25px;background:#d3d3d3;border-color:#b3b8c0;"></div>
<div class="c bc" style="left:1568px;top:945px;width:81px;height:25px;background:#d3d3d3;border-color:#b3b8c0;"></div>
<div class="c bc" style="left:1468px;top:945px;width:101px;height:25px;background:#ededed;border-color:#b3b8c0;"><span class="n"><i class="z"></i></span></div>
<div class="c bc" style="left:1424px;top:945px;width:45px;height:25px;background:#d3d3d3;border-color:#b3b8c0;"></div>
<div class="c bc" style="left:1373px;top:945px;width:52px;height:25px;background:#d3d3d3;border-color:#b3b8c0;"></div>
<div class="c bc" style="left:1288px;top:945px;width:86px;height:25px;background:#ededed;border-color:#b3b8c0;"><span class="n"><i class="z"></i></span></div>
<div class="c bc" style="left:1228px;top:945px;width:61px;height:25px;background:#d3d3d3;border-color:#b3b8c0;"></div>
<div class="c bc" style="left:1167px;top:945px;width:62px;height:25px;background:#d3d3d3;border-color:#b3b8c0;"></div>
<div class="c bc" style="left:1088px;top:945px;width:80px;height:25px;background:#d3d3d3;border-color:#b3b8c0;"></div>
<div class="c bc" style="left:988px;top:945px;width:101px;height:25px;background:#ededed;border-color:#b3b8c0;"><span class="n"><i class="z"></i></span></div>
<div class="c bc" style="left:934px;top:945px;width:55px;height:25px;background:#d3d3d3;border-color:#b3b8c0;"></div>
<div class="c bc" style="left:878px;top:945px;width:57px;height:25px;background:#d3d3d3;border-color:#b3b8c0;"></div>
<div class="c bc" style="left:800px;top:945px;width:79px;height:25px;background:#d3d3d3;border-color:#b3b8c0;"></div>
<div class="c bc" style="left:704px;top:945px;width:97px;height:25px;background:#ededed;border-color:#b3b8c0;"><span class="n"><i class="z"></i></span></div>
<div class="c bc" style="left:646px;top:945px;width:59px;height:25px;background:#d3d3d3;border-color:#b3b8c0;"></div>
<div class="c bc" style="left:585px;top:945px;width:62px;height:25px;background:#d3d3d3;border-color:#b3b8c0;"></div>
<div class="c bc" style="left:505px;top:945px;width:81px;height:25px;background:#d3d3d3;border-color:#b3b8c0;"></div>
<div class="c bc" style="left:406px;top:945px;width:100px;height:25px;background:#ededed;border-color:#b3b8c0;"><span class="n"><i class="z"></i></span></div>
<div class="c bc" style="left:349px;top:945px;width:58px;height:25px;background:#d3d3d3;border-color:#b3b8c0;"></div>
<div class="c bc" style="left:287px;top:945px;width:63px;height:25px;background:#d3d3d3;border-color:#b3b8c0;"></div>
<div class="c bc" style="left:212px;top:945px;width:76px;height:25px;background:#d3d3d3;border-color:#b3b8c0;"></div>
<div class="c bc" style="left:114px;top:945px;width:99px;height:25px;background:#ededed;border-color:#b3b8c0;"><span class="n"><i class="z"></i></span></div>
<div class="c br" style="left:35px;top:945px;width:80px;height:25px;background:#ededed;border-color:#b3b8c0;"></div>
<div class="c br" style="left:1796px;top:969px;width:89px;height:25px;background:#fee09b;border-color:#b3b8c0;"><span class="b">جمع</span></div>
<div class="c br" style="left:1769px;top:969px;width:28px;height:25px;background:#fee09b;border-color:#b3b8c0;"></div>
<div class="c bc" style="left:1708px;top:969px;width:62px;height:25px;background:#fee09b;border-color:#b3b8c0;"></div>
<div class="c bc" style="left:1648px;top:969px;width:61px;height:25px;background:#fee09b;border-color:#b3b8c0;"></div>
<div class="c bc" style="left:1568px;top:969px;width:81px;height:25px;background:#fee09b;border-color:#b3b8c0;"></div>
<div class="c bc" style="left:1468px;top:969px;width:101px;height:25px;background:#fee09b;border-color:#b3b8c0;"><span class="n">۲۵,۸۷۲,۲۲۳</span></div>
<div class="c bc" style="left:1424px;top:969px;width:45px;height:25px;background:#fee09b;border-color:#b3b8c0;"></div>
<div class="c bc" style="left:1373px;top:969px;width:52px;height:25px;background:#fee09b;border-color:#b3b8c0;"></div>
<div class="c bc" style="left:1288px;top:969px;width:86px;height:25px;background:#fee09b;border-color:#b3b8c0;"><span class="n"><i class="z"></i></span></div>
<div class="c bc" style="left:1228px;top:969px;width:61px;height:25px;background:#fee09b;border-color:#b3b8c0;"></div>
<div class="c bc" style="left:1167px;top:969px;width:62px;height:25px;background:#fee09b;border-color:#b3b8c0;"></div>
<div class="c bc" style="left:1088px;top:969px;width:80px;height:25px;background:#fee09b;border-color:#b3b8c0;"></div>
<div class="c bc" style="left:988px;top:969px;width:101px;height:25px;background:#fee09b;border-color:#b3b8c0;"><span class="n">۲۵,۸۷۲,۲۲۳</span></div>
<div class="c bc" style="left:934px;top:969px;width:55px;height:25px;background:#fee09b;border-color:#b3b8c0;"></div>
<div class="c bc" style="left:878px;top:969px;width:57px;height:25px;background:#fee09b;border-color:#b3b8c0;"></div>
<div class="c bc" style="left:800px;top:969px;width:79px;height:25px;background:#fee09b;border-color:#b3b8c0;"></div>
<div class="c bc" style="left:704px;top:969px;width:97px;height:25px;background:#fee09b;border-color:#b3b8c0;"><span class="n">۲,۹۳۰,۷۸۹</span></div>
<div class="c bc" style="left:646px;top:969px;width:59px;height:25px;background:#fee09b;border-color:#b3b8c0;"></div>
<div class="c bc" style="left:585px;top:969px;width:62px;height:25px;background:#fee09b;border-color:#b3b8c0;"></div>
<div class="c bc" style="left:505px;top:969px;width:81px;height:25px;background:#fee09b;border-color:#b3b8c0;"></div>
<div class="c bc" style="left:406px;top:969px;width:100px;height:25px;background:#fee09b;border-color:#b3b8c0;"><span class="n">۲۸,۸۰۳,۰۱۲</span></div>
<div class="c bc" style="left:349px;top:969px;width:58px;height:25px;background:#fee09b;border-color:#b3b8c0;"></div>
<div class="c bc" style="left:287px;top:969px;width:63px;height:25px;background:#fee09b;border-color:#b3b8c0;"></div>
<div class="c bc" style="left:212px;top:969px;width:76px;height:25px;background:#fee09b;border-color:#b3b8c0;"></div>
<div class="c bc" style="left:114px;top:969px;width:99px;height:25px;background:#fee09b;border-color:#b3b8c0;"><span class="n">۱۶,۷۹۹,۲۵۰</span></div>
<div class="c br" style="left:35px;top:969px;width:80px;height:25px;background:#fee09b;border-color:#b3b8c0;"></div>
<div class="c hc0" style="left:1769px;top:370px;width:116px;height:25px;background:#0299cb;border-color:#7fd4f5;"><span class="h0">شرح</span></div>
<div class="c hc0" style="left:1468px;top:370px;width:302px;height:25px;background:#0299cb;border-color:#7fd4f5;"><span class="h0">از ابتدای سال مالی تا تاریخ ۱۴۰۴/۰۷/۳۰</span></div>
<div class="c hc0" style="left:1288px;top:370px;width:181px;height:25px;background:#0299cb;border-color:#7fd4f5;"><span class="h0">اصلاحات</span></div>
<div class="c hc0" style="left:988px;top:370px;width:301px;height:25px;background:#0299cb;border-color:#7fd4f5;"><span class="h0">از ابتدای سال مالی تا تاریخ ۱۴۰۴/۰۷/۳۰ (اصلاح شده)</span></div>
<div class="c hc0" style="left:704px;top:370px;width:285px;height:25px;background:#0299cb;border-color:#7fd4f5;"><span class="h0">دوره یک ماهه منتهی به ۱۴۰۴/۰۸/۳۰</span></div>
<div class="c hc0" style="left:406px;top:370px;width:299px;height:25px;background:#0299cb;border-color:#7fd4f5;"><span class="h0">از ابتدای سال مالی تا تاریخ ۱۴۰۴/۰۸/۳۰</span></div>
<div class="c hc0" style="left:114px;top:370px;width:293px;height:25px;background:#0299cb;border-color:#7fd4f5;"><span class="h0">از ابتدای سال مالی تا تاریخ ۱۴۰۳/۰۸/۳۰</span></div>
<div class="c hc" style="left:35px;top:370px;width:80px;height:66px;background:#0299cb;border-color:#7fd4f5;"><span class="h">وضعیت<br>محصول-واحد</span></div>
<div class="c hc" style="left:1796px;top:394px;width:89px;height:42px;background:#0299cb;border-color:#7fd4f5;"><span class="h">نام محصول</span></div>
<div class="c hc" style="left:1769px;top:394px;width:28px;height:42px;background:#0299cb;border-color:#7fd4f5;"><span class="h">واحد</span></div>
<div class="c hc" style="left:1708px;top:394px;width:62px;height:42px;background:#0299cb;border-color:#7fd4f5;"><span class="h">تعداد تولید</span></div>
<div class="c hc" style="left:1648px;top:394px;width:61px;height:42px;background:#0299cb;border-color:#7fd4f5;"><span class="h">تعداد<br>فروش</span></div>
<div class="c hc" style="left:1568px;top:394px;width:81px;height:42px;background:#0299cb;border-color:#7fd4f5;"><span class="h">نرخ فروش<br>(ریال)</span></div>
<div class="c hc" style="left:1468px;top:394px;width:101px;height:42px;background:#0299cb;border-color:#7fd4f5;"><span class="h">مبلغ فروش<br>(میلیون ریال)</span></div>
<div class="c hc" style="left:1424px;top:394px;width:45px;height:42px;background:#0299cb;border-color:#7fd4f5;"><span class="h">تعداد<br>تولید</span></div>
<div class="c hc" style="left:1373px;top:394px;width:52px;height:42px;background:#0299cb;border-color:#7fd4f5;"><span class="h">تعداد<br>فروش</span></div>
<div class="c hc" style="left:1288px;top:394px;width:86px;height:42px;background:#0299cb;border-color:#7fd4f5;"><span class="h">مبلغ فروش<br>(میلیون ریال)</span></div>
<div class="c hc" style="left:1228px;top:394px;width:61px;height:42px;background:#0299cb;border-color:#7fd4f5;"><span class="h">تعداد تولید</span></div>
<div class="c hc" style="left:1167px;top:394px;width:62px;height:42px;background:#0299cb;border-color:#7fd4f5;"><span class="h">تعداد<br>فروش</span></div>
<div class="c hc" style="left:1088px;top:394px;width:80px;height:42px;background:#0299cb;border-color:#7fd4f5;"><span class="h">نرخ فروش<br>(ریال)</span></div>
<div class="c hc" style="left:988px;top:394px;width:101px;height:42px;background:#0299cb;border-color:#7fd4f5;"><span class="h">مبلغ فروش<br>(میلیون ریال)</span></div>
<div class="c hc" style="left:934px;top:394px;width:55px;height:42px;background:#0299cb;border-color:#7fd4f5;"><span class="h">تعداد<br>تولید</span></div>
<div class="c hc" style="left:878px;top:394px;width:57px;height:42px;background:#0299cb;border-color:#7fd4f5;"><span class="h">تعداد<br>فروش</span></div>
<div class="c hc" style="left:800px;top:394px;width:79px;height:42px;background:#0299cb;border-color:#7fd4f5;"><span class="h">نرخ فروش<br>(ریال)</span></div>
<div class="c hc" style="left:704px;top:394px;width:97px;height:42px;background:#0299cb;border-color:#7fd4f5;"><span class="h">مبلغ فروش<br>(میلیون ریال)</span></div>
<div class="c hc" style="left:646px;top:394px;width:59px;height:42px;background:#0299cb;border-color:#7fd4f5;"><span class="h">تعداد تولید</span></div>
<div class="c hc" style="left:585px;top:394px;width:62px;height:42px;background:#0299cb;border-color:#7fd4f5;"><span class="h">تعداد<br>فروش</span></div>
<div class="c hc" style="left:505px;top:394px;width:81px;height:42px;background:#0299cb;border-color:#7fd4f5;"><span class="h">نرخ فروش<br>(ریال)</span></div>
<div class="c hc" style="left:406px;top:394px;width:100px;height:42px;background:#0299cb;border-color:#7fd4f5;"><span class="h">مبلغ فروش<br>(میلیون ریال)</span></div>
<div class="c hc" style="left:349px;top:394px;width:58px;height:42px;background:#0299cb;border-color:#7fd4f5;"><span class="h">تعداد<br>تولید</span></div>
<div class="c hc" style="left:287px;top:394px;width:63px;height:42px;background:#0299cb;border-color:#7fd4f5;"><span class="h">تعداد<br>فروش</span></div>
<div class="c hc" style="left:212px;top:394px;width:76px;height:42px;background:#0299cb;border-color:#7fd4f5;"><span class="h">نرخ فروش<br>(ریال)</span></div>
<div class="c hc" style="left:114px;top:394px;width:99px;height:42px;background:#0299cb;border-color:#7fd4f5;"><span class="h">مبلغ فروش<br>(میلیون ریال)</span></div>
<div class="a" style="left:35px;top:370px;width:1850px;height:1px;background:#0299cb"></div>
<div class="a" style="left:35px;top:370px;width:1px;height:66px;background:#0299cb"></div>
<div class="a" style="left:1884px;top:370px;width:1px;height:66px;background:#0299cb"></div>
<div class="c hc" style="left:1753px;top:1036px;width:132px;height:65px;background:#0299cb;border-color:#7fd4f5;"><span class="h">شرح</span></div>
<div class="c hc" style="left:1721px;top:1036px;width:33px;height:65px;background:#0299cb;border-color:#7fd4f5;"><span class="h">واحد</span></div>
<div class="c hc" style="left:1466px;top:1036px;width:256px;height:25px;background:#0299cb;border-color:#7fd4f5;"><span class="h">از ابتدای سال مالی تا تاریخ ۱۴۰۴/۰۷/۳۰</span></div>
<div class="c hc" style="left:1251px;top:1036px;width:216px;height:25px;background:#0299cb;border-color:#7fd4f5;"><span class="h">اصلاحات</span></div>
<div class="c hc" style="left:950px;top:1036px;width:302px;height:25px;background:#0299cb;border-color:#7fd4f5;"><span class="h">ازابتدای سال مالی تا تاریخ ۱۴۰۴/۰۷/۳۰ (اصلاح شده)</span></div>
<div class="c hc" style="left:707px;top:1036px;width:244px;height:25px;background:#0299cb;border-color:#7fd4f5;"><span class="h">خرید دوره یک ماهه منتهی به ۱۴۰۴/۰۸/۳۰</span></div>
<div class="c hc" style="left:290px;top:1036px;width:418px;height:25px;background:#0299cb;border-color:#7fd4f5;"><span class="h">مواد اولیه خریداری شده از ابتدای دوره تا پایان دوره منتهی به ۱۴۰۴/۰۸/۳۰</span></div>
<div class="c hc" style="left:35px;top:1036px;width:256px;height:25px;background:#0299cb;border-color:#7fd4f5;"><span class="h">از ابتدای سال مالی تا تاریخ ۱۴۰۳/۰۸/۳۰</span></div>
<div class="c hc" style="left:1652px;top:1060px;width:70px;height:41px;background:#0299cb;border-color:#7fd4f5;"><span class="h">مقدار</span></div>
<div class="c hc" style="left:1575px;top:1060px;width:78px;height:41px;background:#0299cb;border-color:#7fd4f5;"><span class="h">نرخ (ریال)</span></div>
<div class="c hc" style="left:1466px;top:1060px;width:110px;height:41px;background:#0299cb;border-color:#7fd4f5;"><span class="h">مبلغ (میلیون ریال)</span></div>
<div class="c hc" style="left:1428px;top:1060px;width:39px;height:41px;background:#0299cb;border-color:#7fd4f5;"><span class="h">مقدار</span></div>
<div class="c hc" style="left:1365px;top:1060px;width:64px;height:41px;background:#0299cb;border-color:#7fd4f5;"><span class="h">نرخ (ریال)</span></div>
<div class="c hc" style="left:1251px;top:1060px;width:115px;height:41px;background:#0299cb;border-color:#7fd4f5;"><span class="h">مبلغ ( میلیون ریال)</span></div>
<div class="c hc" style="left:1169px;top:1060px;width:83px;height:41px;background:#0299cb;border-color:#7fd4f5;"><span class="h">مقدار</span></div>
<div class="c hc" style="left:1080px;top:1060px;width:90px;height:41px;background:#0299cb;border-color:#7fd4f5;"><span class="h">نرخ (ریال)</span></div>
<div class="c hc" style="left:950px;top:1060px;width:131px;height:41px;background:#0299cb;border-color:#7fd4f5;"><span class="h">مبلغ (میلیون ریال)</span></div>
<div class="c hc" style="left:899px;top:1060px;width:52px;height:41px;background:#0299cb;border-color:#7fd4f5;"><span class="h">مقدار</span></div>
<div class="c hc" style="left:821px;top:1060px;width:79px;height:41px;background:#0299cb;border-color:#7fd4f5;"><span class="h">نرخ (ریال)</span></div>
<div class="c hc" style="left:707px;top:1060px;width:115px;height:41px;background:#0299cb;border-color:#7fd4f5;"><span class="h">مبلغ (میلیون ریال)</span></div>
<div class="c hc" style="left:591px;top:1060px;width:117px;height:41px;background:#0299cb;border-color:#7fd4f5;"><span class="h">مقدار</span></div>
<div class="c hc" style="left:468px;top:1060px;width:124px;height:41px;background:#0299cb;border-color:#7fd4f5;"><span class="h">نرخ (ریال)</span></div>
<div class="c hc" style="left:290px;top:1060px;width:179px;height:41px;background:#0299cb;border-color:#7fd4f5;"><span class="h">مبلغ (میلیون ریال)</span></div>
<div class="c hc" style="left:221px;top:1060px;width:70px;height:41px;background:#0299cb;border-color:#7fd4f5;"><span class="h">مقدار</span></div>
<div class="c hc" style="left:145px;top:1060px;width:77px;height:41px;background:#0299cb;border-color:#7fd4f5;"><span class="h">نرخ (ریال)</span></div>
<div class="c hc" style="left:35px;top:1060px;width:111px;height:41px;background:#0299cb;border-color:#7fd4f5;"><span class="h">مبلغ (میلیون ریال)</span></div>
<div class="a" style="left:35px;top:1036px;width:1850px;height:1px;background:#0299cb"></div>
<div class="a" style="left:35px;top:1036px;width:1px;height:60px;background:#0299cb"></div>
<div class="a" style="left:1884px;top:1036px;width:1px;height:60px;background:#0299cb"></div>
<div class="a" style="left:955px;top:532px;width:0;height:0"><div style="position:absolute;left:-330px;top:-60px;width:660px;height:120px;line-height:120px;text-align:center;transform:rotate(-45deg);font-size:93px;font-weight:bold;color:rgba(60,60,60,0.075);white-space:nowrap">@Codal360.ir</div></div>
</body></html>
